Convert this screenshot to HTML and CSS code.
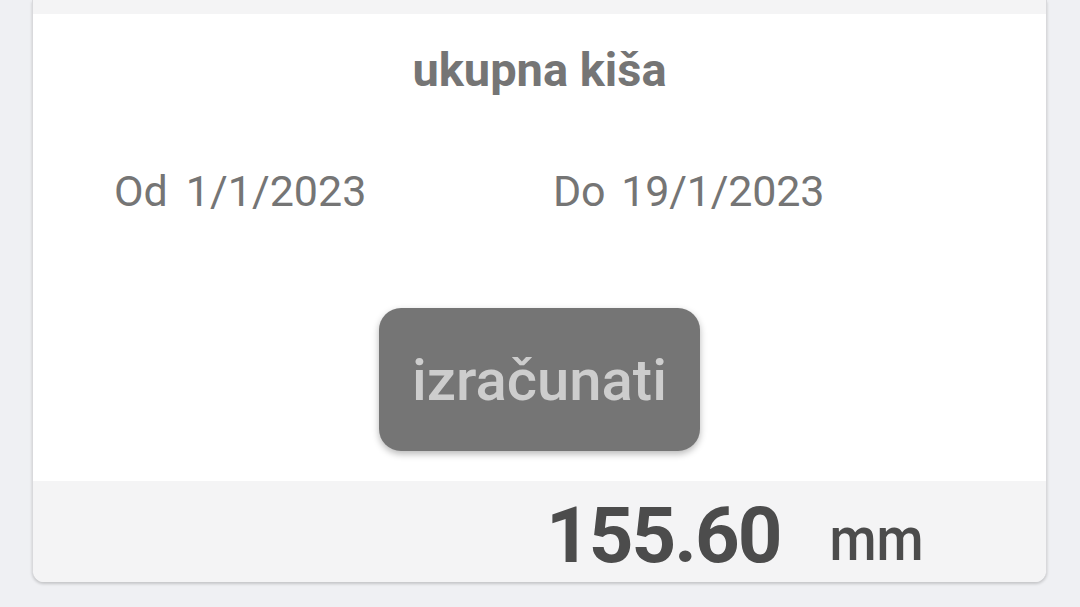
FILE: index.html
```html
<!DOCTYPE html>
<html>
<head>
<meta charset="utf-8">
<link rel="stylesheet" href="styles.css">
</head>
<body>
<div class="card">
  <div class="top-strip"></div>
  <div class="content">
    <h1 class="title">ukupna kiša</h1>
    <div class="dates">
      <div class="date date-from"><span class="label">Od</span><span class="value">1/1/2023</span></div>
      <div class="date date-to"><span class="label">Do</span><span class="value">19/1/2023</span></div>
    </div>
    <div class="btn-row"><button class="calc-btn">izračunati</button></div>
  </div>
  <div class="result">
    <span class="amount">155.60</span><span class="unit">mm</span>
  </div>
</div>
</body>
</html>
```
FILE: styles.css
```css
html, body {
  margin: 0;
  padding: 0;
}
body {
  background: #eff0f3;
  font-family: Roboto, "Noto Sans", sans-serif;
  width: 1080px;
  height: 607px;
  overflow: hidden;
}
.card {
  margin: 0 32px;
  width: 1015px;
  box-sizing: border-box;
  background: #ffffff;
  border-left: 1px solid #d9d9dc;
  border-right: 1px solid #d9d9dc;
  border-radius: 0 0 12px 12px;
  box-shadow: 0 2px 3px rgba(0,0,0,0.18);
  overflow: hidden;
}
.top-strip {
  height: 14px;
  background: #f4f4f5;
}
.content {
  height: 467px;
  display: flex;
  flex-direction: column;
}
.title {
  margin: 0;
  padding-top: 28px;
  text-align: center;
  font-size: 47px;
  line-height: 56px;
  font-weight: 700;
  color: #757575;
}
.dates {
  display: flex;
  margin-top: 68px;
  padding-left: 81px;
  color: #757575;
  font-size: 43px;
  line-height: 50px;
}
.date {
  display: flex;
  gap: 18px;
}
.date-from {
  width: 439px;
}
.date-to {
  gap: 16px;
  letter-spacing: -0.2px;
}
.btn-row {
  display: flex;
  justify-content: center;
  margin-top: 92px;
}
.calc-btn {
  width: 321px;
  height: 143px;
  border: none;
  border-radius: 22px;
  background: #757575;
  color: #cdcdcd;
  font-family: Roboto, sans-serif;
  font-size: 58px;
  font-weight: 500;
  box-shadow: 0 3px 7px rgba(0,0,0,0.28);
  padding: 0;
}
.result {
  height: 101px;
  background: #f4f4f5;
  display: flex;
  align-items: baseline;
  padding-left: 513px;
  padding-top: 7px;
  box-sizing: border-box;
  color: #4c4c4c;
}
.amount {
  font-size: 78px;
  font-weight: 700;
  line-height: 96px;
  letter-spacing: -2px;
}
.unit {
  display: inline-block;
  font-size: 54px;
  font-weight: 500;
  margin-left: 49px;
  transform: scaleY(1.12);
  transform-origin: 50% 100%;
}
```
